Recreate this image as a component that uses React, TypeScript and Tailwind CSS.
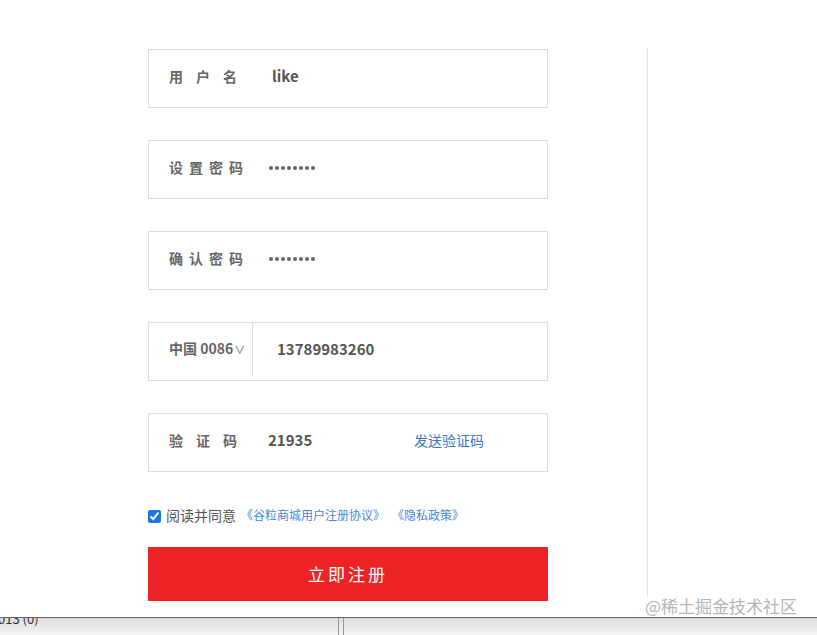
import React from "react";

const font = { fontFamily: '"Noto Sans CJK SC", "Noto Sans", sans-serif' };

function Row({ label, wide, children }: { label: string; wide?: boolean; children?: React.ReactNode }) {
  return (
    <div className="h-[59px] border border-[#dddddd] flex items-center pl-[20px] pb-[4px]">
      <div
        className={`w-[100px] shrink-0 text-[14px] font-bold text-[#666666] ${wide ? "tracking-[13px]" : "tracking-[6px]"}`}
      >
        {label}
      </div>
      {children}
    </div>
  );
}

function Dots() {
  return (
    <div className="flex gap-[2px] items-center mt-[1px]">
      {Array.from({ length: 8 }).map((_, i) => (
        <span key={i} className="w-[4px] h-[4px] rounded-full bg-[#666666]" />
      ))}
    </div>
  );
}

export default function App() {
  return (
    <div className="w-[817px] h-[635px] overflow-hidden bg-white flex flex-col" style={font}>
      <div className="relative h-[617px] flex shrink-0">
        <div className="ml-[148px] w-[400px] pt-[49px] flex flex-col">
          <Row label="用户名" wide>
            <span className="ml-[3px] text-[15px] font-bold text-[#555555]">like</span>
          </Row>
          <div className="mt-[32px]">
            <Row label="设置密码">
              <Dots />
            </Row>
          </div>
          <div className="mt-[32px]">
            <Row label="确认密码">
              <Dots />
            </Row>
          </div>
          <div className="mt-[32px] h-[59px] border border-[#dddddd] flex items-center">
            <div className="w-[104px] h-[53px] self-start border-r border-[#dddddd] flex items-center pl-[20px] pb-[2px] text-[14px] font-bold text-[#666666]">
              中国&nbsp;0086<span className="text-[11px] font-normal ml-[1px] mt-[2px]">∨</span>
            </div>
            <span className="ml-[24px] pb-[4px] text-[15px] font-bold text-[#555555]">13789983260</span>
          </div>
          <div className="mt-[32px]">
            <Row label="验证码" wide>
              <span className="w-[146px] text-[15px] font-bold text-[#555555] -ml-[1px]">21935</span>
              <span className="text-[14px] text-[#3b78c0]">发送验证码</span>
            </Row>
          </div>
          <div className="mt-[35px] flex items-center h-[16px]">
            <input type="checkbox" defaultChecked className="w-[13px] h-[13px] m-0 mt-[3px] accent-[#1a73e8]" />
            <span className="ml-[5px] text-[14px] text-[#555555]">阅读并同意</span>
            <span className="ml-[5px] text-[12px] text-[#4a86d8]">《谷粒商城用户注册协议》</span>
            <span className="ml-[7px] text-[12px] text-[#4a86d8]">《隐私政策》</span>
          </div>
          <button className="mt-[24px] w-[400px] h-[54px] bg-[#ee2325] text-white text-[17px] tracking-[3px] flex items-center justify-center">
            立即注册
          </button>
        </div>
        <div className="ml-[99px] mt-[48px] h-[549px] border-l border-[#e6e6e6]" />
        <div className="absolute left-[645px] top-[596px] text-[17px] text-[#b5b5b5] leading-[20px]">
          @稀土掘金技术社区
        </div>
      </div>
      <div className="h-[18px] border-t border-[#666666] bg-gradient-to-b from-[#dcdcdc] to-[#f4f4f4] flex overflow-hidden">
        <div className="w-[340px] text-[13px] text-[#333333] leading-[13px] -mt-[6px] -ml-[2px]">013 (0)</div>
        <div className="w-[6px] h-full border-l border-r border-[#999999]" />
      </div>
    </div>
  );
}
